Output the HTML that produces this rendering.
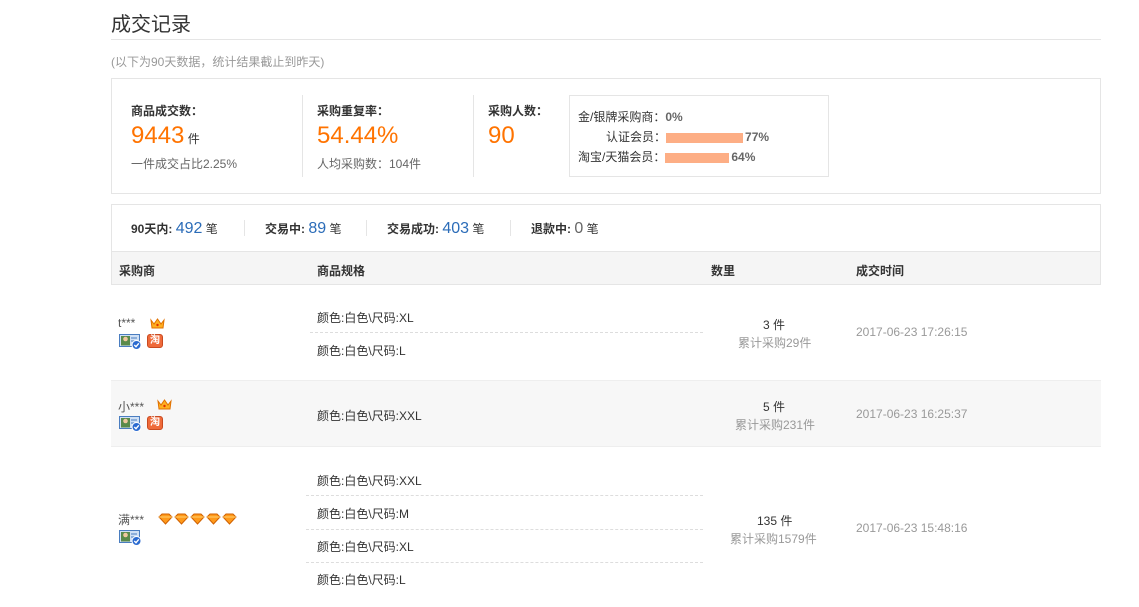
<!DOCTYPE html>
<html><head><meta charset="utf-8"><style>
*{margin:0;padding:0;box-sizing:border-box}
body{width:1139px;height:607px;background:#fff;position:relative;overflow:hidden;font-family:"Liberation Sans","Noto Sans CJK SC",sans-serif;font-size:12px;color:#333}
.a{position:absolute;white-space:nowrap}
.b{font-weight:bold}
.or{color:#ff7300;font-size:24px}
.bl{color:#2b6cb8;font-size:16px}
.g{color:#999}
.dash{position:absolute;border-top:1px dashed #ddd;height:0}
.vd{position:absolute;width:1px;background:#e5e5e5}
.bar{display:inline-block;height:10px;background:#fdae85;vertical-align:middle;margin-right:2px}
.tao{position:absolute;width:16px;height:14px;background:#ef6a3a;border:1px solid #c94a20;border-radius:3px;color:#fff;font-size:10px;line-height:12px;text-align:center;font-weight:bold}
svg{position:absolute}
</style></head><body>
<svg width="0" height="0" style="position:absolute"><defs>
<g id="crown"><path d="M1 3 L4 7 L7.5 2 L11 7 L14 3 L13 11 L2 11 Z" fill="#ffb020" stroke="#e07000" stroke-width="1"/><circle cx="7.5" cy="8" r="1.2" fill="#e03000"/></g>
<g id="dia"><path d="M1 4 L4 1 L11 1 L14 4 L7.5 11 Z" fill="#ff9a1a" stroke="#d06000" stroke-width="1"/><path d="M1 4 L14 4" stroke="#ffd070" stroke-width="1"/></g>
<symbol id="card" viewBox="0 0 23 16"><rect x="0.5" y="0.5" width="20" height="12" fill="#cfe0f5" stroke="#4a7dc0"/><rect x="2" y="2" width="9" height="9.5" fill="#5a8a4a"/><circle cx="6.5" cy="5" r="2.3" fill="#f0c8a0"/><path d="M12 4 H18 M12 7 H16" stroke="#4a7dc0"/><circle cx="17.5" cy="11" r="4.5" fill="#2a6ad0" stroke="#fff"/><path d="M15.3 11 L17 12.7 L19.8 9.3" stroke="#fff" stroke-width="1.4" fill="none"/></symbol>
</defs></svg>

<div class="a" style="left:111px;top:8px;font-size:20px;color:#333">成交记录</div>
<div class="a" style="left:111px;top:39px;width:990px;height:1px;background:#e5e5e5"></div>
<div class="a g" style="left:111px;top:53px">(以下为90天数据，统计结果截止到昨天)</div>

<div class="a" style="left:111px;top:78px;width:990px;height:116px;border:1px solid #e5e5e5"></div>
<div class="a b" style="left:131px;top:102px">商品成交数：</div>
<div class="a" style="left:131px;top:122px"><span class="or">9443</span> 件</div>
<div class="a" style="left:131px;top:155px;color:#666">一件成交占比2.25%</div>
<div class="vd" style="left:302px;top:95px;height:82px"></div>
<div class="a b" style="left:317px;top:102px">采购重复率：</div>
<div class="a" style="left:317px;top:122px"><span class="or">54.44%</span></div>
<div class="a" style="left:317px;top:155px;color:#666">人均采购数：104件</div>
<div class="vd" style="left:473px;top:95px;height:82px"></div>
<div class="a b" style="left:488px;top:102px">采购人数：</div>
<div class="a" style="left:488px;top:122px"><span class="or">90</span></div>
<div class="a" style="left:569px;top:95px;width:260px;height:82px;border:1px solid #e5e5e5"></div>
<div class="a" style="left:578px;top:108px">金/银牌采购商：<b style="color:#666">0%</b></div>
<div class="a" style="left:606px;top:128px">认证会员：<span class="bar" style="width:77px"></span><b style="color:#666">77%</b></div>
<div class="a" style="left:578px;top:148px">淘宝/天猫会员：<span class="bar" style="width:64px"></span><b style="color:#666">64%</b></div>

<div class="a" style="left:111px;top:204px;width:990px;height:81px;border:1px solid #e5e5e5;border-bottom:none"></div>
<div class="a" style="left:131px;top:220px"><b>90天内:</b> <span class="bl">492</span> 笔</div>
<div class="vd" style="left:244px;top:220px;height:16px"></div>
<div class="a" style="left:265px;top:220px"><b>交易中:</b> <span class="bl">89</span> 笔</div>
<div class="vd" style="left:366px;top:220px;height:16px"></div>
<div class="a" style="left:387px;top:220px"><b>交易成功:</b> <span class="bl">403</span> 笔</div>
<div class="vd" style="left:510px;top:220px;height:16px"></div>
<div class="a" style="left:531px;top:220px"><b>退款中:</b> <span class="bl" style="color:#666">0</span> 笔</div>

<div class="a" style="left:111px;top:251px;width:990px;height:34px;background:#f5f5f5;border:1px solid #e5e5e5"></div>
<div class="a b" style="left:119px;top:262px">采购商</div>
<div class="a b" style="left:317px;top:262px">商品规格</div>
<div class="a b" style="left:711px;top:262px">数里</div>
<div class="a b" style="left:856px;top:262px">成交时间</div>

<!-- row1 -->
<div class="a" style="left:118px;top:316px;color:#555">t***</div>
<svg style="left:150px;top:317px" width="16" height="13"><use href="#crown"/></svg>
<svg style="left:119px;top:334px" width="23" height="16"><use href="#card"/></svg>
<div class="tao" style="left:147px;top:334px">淘</div>
<div class="a" style="left:317px;top:309px">颜色:白色\尺码:XL</div>
<div class="dash" style="left:310px;top:332px;width:393px"></div>
<div class="a" style="left:317px;top:342px">颜色:白色\尺码:L</div>
<div class="a" style="left:763px;top:316px">3 件</div>
<div class="a g" style="left:738px;top:334px">累计采购29件</div>
<div class="a g" style="left:856px;top:325px">2017-06-23 17:26:15</div>

<!-- row2 -->
<div class="a" style="left:111px;top:380px;width:990px;height:67px;background:#f7f7f7;border-top:1px solid #eee;border-bottom:1px solid #eee"></div>
<div class="a" style="left:118px;top:398px;color:#555">小***</div>
<svg style="left:157px;top:398px" width="16" height="13"><use href="#crown"/></svg>
<svg style="left:119px;top:416px" width="23" height="16"><use href="#card"/></svg>
<div class="tao" style="left:147px;top:416px">淘</div>
<div class="a" style="left:317px;top:407px">颜色:白色\尺码:XXL</div>
<div class="a" style="left:763px;top:398px">5 件</div>
<div class="a g" style="left:735px;top:416px">累计采购231件</div>
<div class="a g" style="left:856px;top:407px">2017-06-23 16:25:37</div>

<!-- row3 -->
<div class="a" style="left:118px;top:511px;color:#555">满***</div>
<svg style="left:158px;top:513px" width="80" height="12"><use href="#dia"/><use href="#dia" x="16"/><use href="#dia" x="32"/><use href="#dia" x="48"/><use href="#dia" x="64"/></svg>
<svg style="left:119px;top:530px" width="23" height="16"><use href="#card"/></svg>
<div class="a" style="left:317px;top:472px">颜色:白色\尺码:XXL</div>
<div class="dash" style="left:306px;top:495px;width:397px"></div>
<div class="a" style="left:317px;top:505px">颜色:白色\尺码:M</div>
<div class="dash" style="left:306px;top:529px;width:397px"></div>
<div class="a" style="left:317px;top:538px">颜色:白色\尺码:XL</div>
<div class="dash" style="left:306px;top:562px;width:397px"></div>
<div class="a" style="left:317px;top:571px">颜色:白色\尺码:L</div>
<div class="a" style="left:757px;top:512px">135 件</div>
<div class="a g" style="left:730px;top:530px">累计采购1579件</div>
<div class="a g" style="left:856px;top:521px">2017-06-23 15:48:16</div>
</body></html>
